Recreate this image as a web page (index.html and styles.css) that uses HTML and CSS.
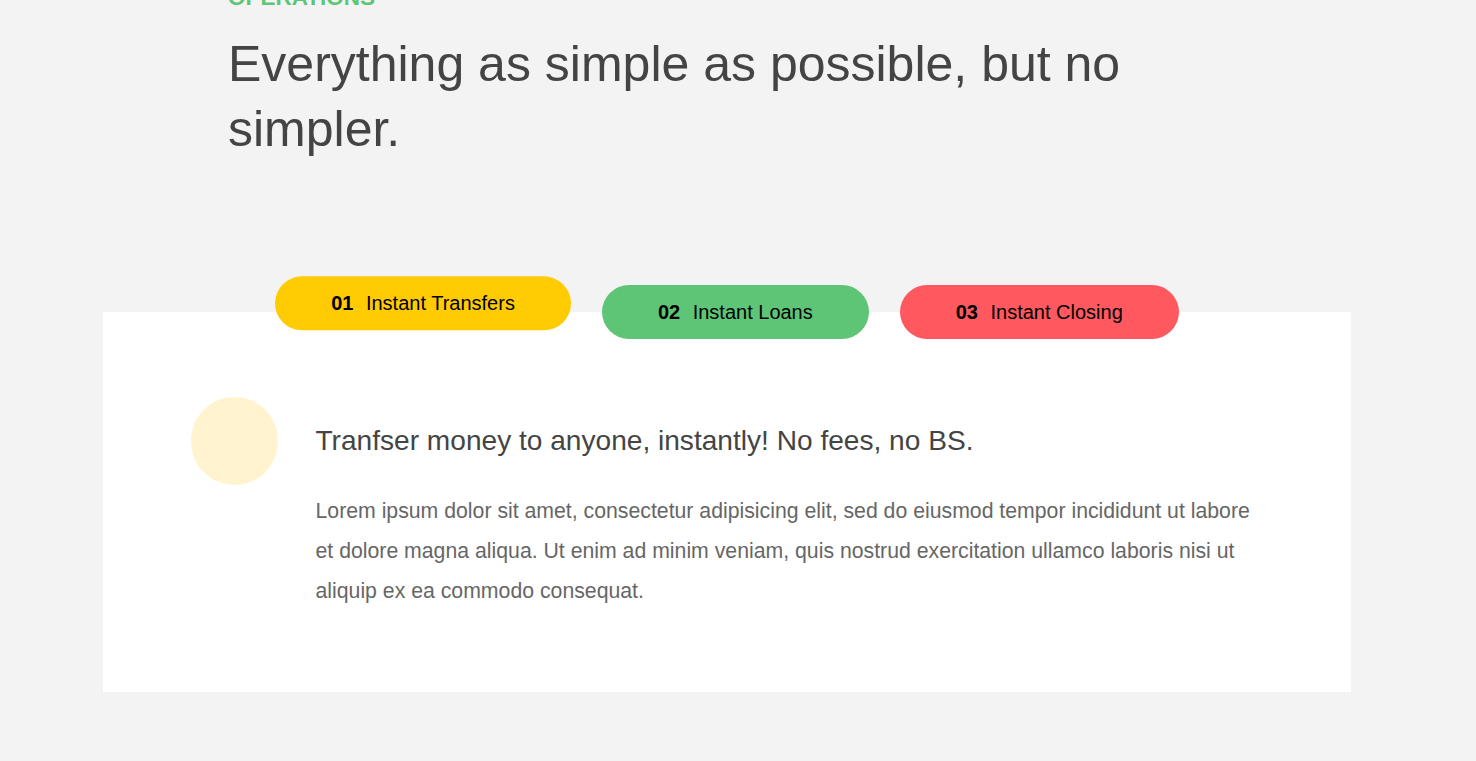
FILE: index.html
```html
<!DOCTYPE html>
<html lang="en">
<head>
<meta charset="utf-8">
<title>Operations</title>
<link rel="stylesheet" href="styles.css">
</head>
<body>
<div class="page">
  <section class="section">
    <div class="section__title">
      <h2 class="section__description">Operations</h2>
      <h3 class="section__header">Everything as simple as possible, but no simpler.</h3>
    </div>
    <div class="operations">
      <div class="operations__tab-container">
        <button class="btn operations__tab operations__tab--1 operations__tab--active"><span>01</span>Instant Transfers</button>
        <button class="btn operations__tab operations__tab--2"><span>02</span>Instant Loans</button>
        <button class="btn operations__tab operations__tab--3"><span>03</span>Instant Closing</button>
      </div>
      <div class="operations__content">
        <div class="operations__icon operations__icon--1"></div>
        <h5 class="operations__header">Tranfser money to anyone, instantly! No fees, no BS.</h5>
        <p class="operations__text">Lorem ipsum dolor sit amet, consectetur adipisicing elit, sed do eiusmod tempor incididunt ut labore et dolore magna aliqua. Ut enim ad minim veniam, quis nostrud exercitation ullamco laboris nisi ut aliquip ex ea commodo consequat.</p>
      </div>
    </div>
  </section>
</div>
</body>
</html>
```
FILE: styles.css
```css
* { margin: 0; padding: 0; box-sizing: border-box; }
html, body { background: #f3f3f3; }
body {
  font-family: "Liberation Sans", Arial, sans-serif;
  color: #444;
  line-height: 1.9;
  overflow: hidden;
}
.page { width: 1454px; }
.section {
  margin-top: -23px;
  padding: 0 37.5px 190px;
}
.section__title {
  max-width: 1000px;
  margin: 0 auto 150px;
  padding-left: 1px;
}
.section__description {
  font-size: 22.5px;
  font-weight: 700;
  text-transform: uppercase;
  color: #5ec576;
  margin-bottom: 12.5px;
  line-height: 42.75px;
}
.section__header {
  font-size: 50px;
  line-height: 65px;
  font-weight: 400;
  color: #444;
}
.operations {
  max-width: 1248px;
  margin: 0 auto;
  background: #fff;
}
.operations__tab-container {
  display: flex;
  justify-content: center;
  gap: 31px;
}
.btn {
  display: inline-block;
  font-family: inherit;
  font-size: 20px;
  line-height: 23px;
  font-weight: 400;
  border: none;
  padding: 15.5px 56px;
  border-radius: 125px;
  color: #000;
  cursor: pointer;
}
.operations__tab { transform: translateY(-50%); }
.operations__tab span { font-weight: 700; margin-right: 12.5px; display: inline-block; }
.operations__tab--active { transform: translateY(-66%); }
.operations__tab--1 { background: #ffcb03; }
.operations__tab--2 { background: #5ec576; }
.operations__tab--3 { background: #ff585f; }
.operations__content {
  display: grid;
  grid-template-columns: 87.5px 1fr;
  column-gap: 37.5px;
  row-gap: 6px;
  padding: 31px 87.5px 81px;
  font-size: 21.25px;
}
.operations__icon {
  width: 87.5px;
  height: 87.5px;
  border-radius: 50%;
}
.operations__icon--1 { background: #fff4cf; }
.operations__header {
  font-size: 28.1px;
  font-weight: 400;
  align-self: center;
  color: #444;
  line-height: 1.3;
}
.operations__text {
  grid-column: 2;
  color: #666;
  line-height: 40px;
}
```
